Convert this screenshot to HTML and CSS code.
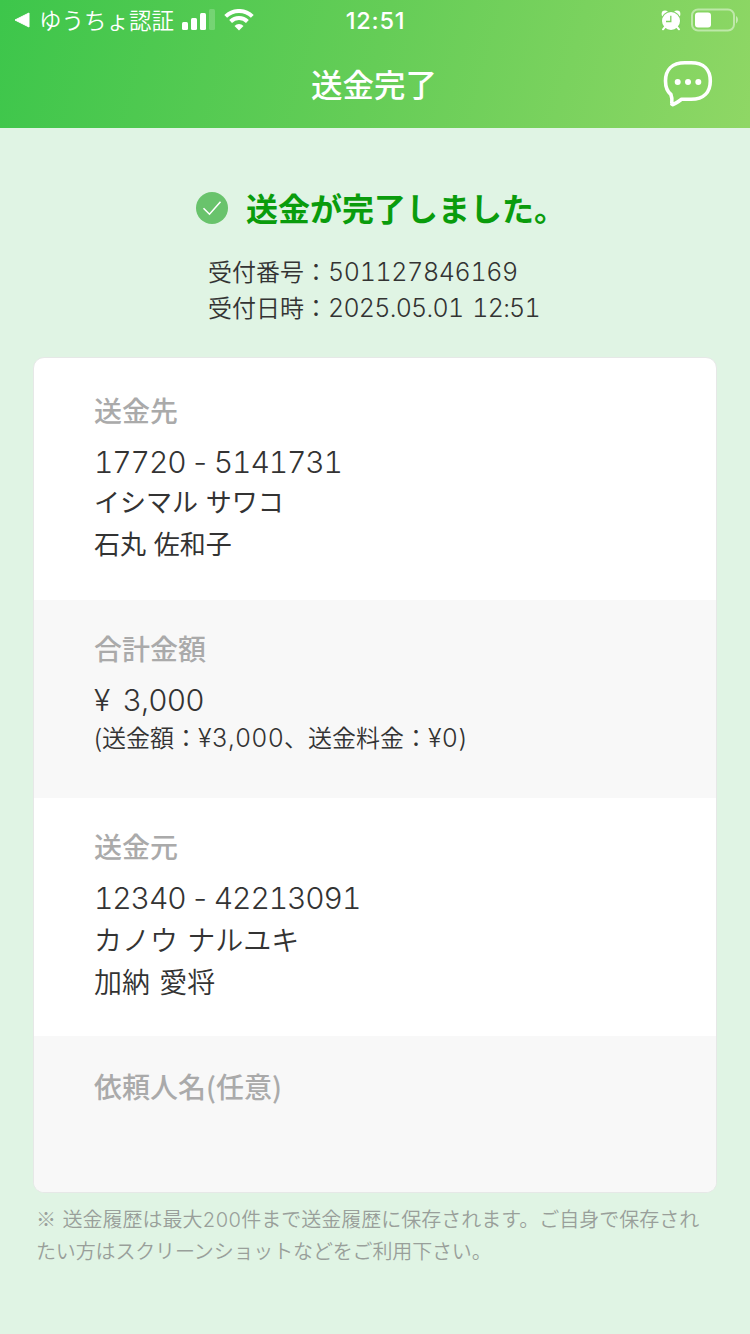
FILE: index.html
```
<!DOCTYPE html>
<html lang="ja">
<head>
  <meta charset="UTF-8">
  <meta name="viewport" content="width=device-width, initial-scale=1.0">
  <title>送金完了</title>
  <link rel="stylesheet" href="styles.css">
</head>
<body>
  <header class="header">
    <div class="statusBar">
      <div class="statusLeft">
        <svg class="backArrow" width="16" height="16" viewBox="0 0 16 16"><path d="M15 1v14L1 8z" fill="#fff" stroke="#fff" stroke-linejoin="round"/></svg>
        <span class="backApp">ゆうちょ認証</span>
        <svg class="signal" width="33" height="22" viewBox="0 0 33 22" fill="#fff">
          <rect x="0" y="13" width="6" height="8" rx="1.5"/>
          <rect x="9" y="9" width="6" height="12" rx="1.5"/>
          <rect x="18" y="4" width="6" height="17" rx="1.5"/>
          <rect x="27" y="0" width="6" height="21" rx="1.5" opacity="0.2"/>
        </svg>
        <svg class="wifi" width="30" height="22" viewBox="0 0 30 22" fill="none" stroke="#fff" stroke-width="4">
          <path d="M1.7 7.4a19 19 0 0 1 26.6 0"/>
          <path d="M6.6 12.5a12 12 0 0 1 16.8 0"/>
          <path d="M15 21.5l-4.5-4.6a6.4 6.4 0 0 1 9 0z" fill="#fff" stroke="none"/>
        </svg>
      </div>
      <div class="clock">12:51</div>
      <div class="statusRight">
        <svg class="alarm" width="20" height="21" viewBox="0 0 20 21">
          <circle cx="4" cy="4" r="3.4" fill="#fff"/>
          <circle cx="16" cy="4" r="3.4" fill="#fff"/>
          <circle cx="10" cy="11" r="10" fill="#7ed160"/>
          <circle cx="10" cy="11" r="9" fill="#fff"/>
          <path d="M4 17l-2 2.3M16 17l2 2.3" stroke="#fff" stroke-width="2" stroke-linecap="round"/>
          <path d="M9.8 5.8v5.7H5" fill="none" stroke="#7ed160" stroke-width="1.3"/>
        </svg>
        <svg class="battery" width="49" height="24" viewBox="0 0 49 24">
          <rect x="2" y="1.5" width="42" height="21" rx="6" fill="none" stroke="#fff" stroke-width="2" opacity="0.45"/>
          <rect x="5" y="4.5" width="16" height="15" rx="3" fill="#fff"/>
          <path d="M46 8c2.6 1.4 2.6 6 0 7.4z" fill="#fff" opacity="0.5"/>
        </svg>
      </div>
    </div>
    <div class="titleBar">
      <h1>送金完了</h1>
      <svg class="chat" width="50" height="48" viewBox="0 0 50 48">
        <path d="M22 2.8h6C41 2.8 47.3 10 47.3 21S41 39.3 28 39.3H18.5c-3 2.2-5.500 4.200-8.500 5.200-.9.300-1.400-.3-1.200-1.200.5-3.300.2-6-.9-8.800C4.300 31.500 2.500 27 2.500 21 2.500 10 9 2.800 22 2.800z" fill="none" stroke="#fff" stroke-width="3.6" stroke-linejoin="round"/>
        <circle cx="14.7" cy="22" r="3" fill="#fff"/>
        <circle cx="25" cy="22" r="3" fill="#fff"/>
        <circle cx="35.3" cy="22" r="3" fill="#fff"/>
      </svg>
    </div>
  </header>

  <main class="container">
    <div class="complete">
      <svg width="32" height="32" viewBox="0 0 32 32">
        <circle cx="16" cy="16" r="16" fill="#69c36c"/>
        <path d="M7.5 16.2l6 6L24.5 9.8" fill="none" stroke="#fff" stroke-width="1.6"/>
      </svg>
      <h2>送金が完了しました。</h2>
    </div>
    <div class="receipt">
      <p>受付番号：<span class="num">501127846169</span></p>
      <p>受付日時：<span class="num date">2025.05.01 12:51</span></p>
    </div>

    <div class="card">
      <section class="section to">
        <h3>送金先</h3>
        <p class="account num">17720 - 5141731</p>
        <p class="name">イシマル サワコ</p>
        <p class="name">石丸 佐和子</p>
      </section>
      <section class="section amount">
        <h3>合計金額</h3>
        <p class="account num total">¥ 3,000</p>
        <p class="detail">(送金額：<span class="num">¥3,000</span>、送金料金：<span class="num">¥0)</span></p>
      </section>
      <section class="section from">
        <h3>送金元</h3>
        <p class="account num">12340 - 42213091</p>
        <p class="name">カノウ ナルユキ</p>
        <p class="name">加納 愛将</p>
      </section>
      <section class="section client">
        <h3>依頼人名(任意)</h3>
      </section>
    </div>

    <p class="note">※ 送金履歴は最大<span class="num">200</span>件まで送金履歴に保存されます。ご自身で保存され<br><span class="noteEnd">たい方はスクリーンショットなどをご利用下さい。</span></p>
  </main>
</body>
</html>
```
FILE: styles.css
```
* {
  margin: 0;
  padding: 0;
  box-sizing: border-box;
}
body {
  background: #e0f4e4;
  color: #333;
  font-family: "Noto Sans CJK JP", sans-serif;
  font-weight: 350;
  min-height: 100vh;
}
svg {
  display: block;
  flex: none;
}
.num {
  font-family: Inter, "Noto Sans CJK JP", sans-serif;
  font-weight: 300;
  font-feature-settings: "tnum";
  line-height: 1;
}
.header {
  height: 128px;
  background: linear-gradient(105deg, #3dc64b 0%, #65cd57 50%, #8fd765 100%);
  color: #fff;
}
.statusBar {
  display: grid;
  grid-template-columns: 1fr auto 1fr;
  align-items: center;
  height: 40px;
  padding: 0 11px 0 14px;
}
.statusLeft, .statusRight {
  display: flex;
  align-items: center;
}
.statusRight {
  justify-content: flex-end;
  gap: 9px;
}
.backApp {
  margin: 0 8px 0 9px;
  font-size: 22.5px;
  line-height: 38px;
  padding-bottom: 2px;
  white-space: nowrap;
}
.wifi {
  margin-left: 9px;
}
.clock {
  padding: 1px 2px 0 0;
  font-family: Inter, sans-serif;
  font-size: 23.5px;
  font-weight: 500;
  letter-spacing: 0.8px;
}
.titleBar {
  display: grid;
  grid-template-columns: 1fr auto 1fr;
  align-items: center;
  height: 88px;
  padding: 0 37px;
}
.titleBar h1 {
  grid-column: 2;
  padding: 0 2px 1px 0;
  font-size: 31.5px;
  font-weight: 500;
  line-height: 85px;
}
.chat {
  justify-self: end;
}
.container {
  padding: 56px 33px 0;
}
.complete {
  display: flex;
  align-items: center;
  gap: 18px;
  height: 48px;
  padding-left: 163px;
}
.complete h2 {
  padding-bottom: 2px;
  color: #0a9c0c;
  font-size: 32px;
  font-weight: 700;
  line-height: 46px;
}
.receipt {
  margin-top: 21px;
  padding-left: 175px;
  font-size: 24px;
  line-height: 36px;
}
.receipt .num {
  font-size: 25px;
  letter-spacing: -0.35px;
}
.receipt .date {
  letter-spacing: -0.75px;
  word-spacing: 3px;
}
.card {
  margin-top: 32px;
  border: 1px solid #e6e8e7;
  border-radius: 11px;
  background: #fff;
  overflow: hidden;
}
.section {
  padding: 27px 60px 0;
}
.section h3 {
  color: #aaa;
  font-size: 28px;
  font-weight: 500;
  line-height: 42px;
}
.account {
  margin-top: 11px;
  font-size: 30px;
  line-height: 40px;
  letter-spacing: -1.1px;
  word-spacing: -2px;
}
.to {
  height: 242px;
  padding-top: 31px;
}
.to .account {
  margin-top: 13px;
  line-height: 36px;
}
.to .name {
  font-size: 26px;
  font-weight: 400;
  line-height: 42px;
  word-spacing: 2px;
}
.amount {
  height: 198px;
  background: #f8f8f8;
}
.amount .total {
  letter-spacing: -0.9px;
  word-spacing: 6px;
}
.detail {
  font-size: 24px;
  line-height: 34px;
}
.detail .num {
  font-size: 25px;
  letter-spacing: 0.2px;
}
.from {
  height: 238px;
}
.from .name {
  font-size: 28px;
  line-height: 42px;
  word-spacing: 3px;
}
.client {
  height: 156px;
  padding-top: 29px;
  background: #f8f8f8;
}
.note {
  margin: 10px 0 0 3px;
  color: #999f9a;
  font-size: 20px;
  line-height: 32px;
  word-spacing: 2px;
  white-space: nowrap;
}
.noteEnd {
  letter-spacing: -0.15px;
}
```
